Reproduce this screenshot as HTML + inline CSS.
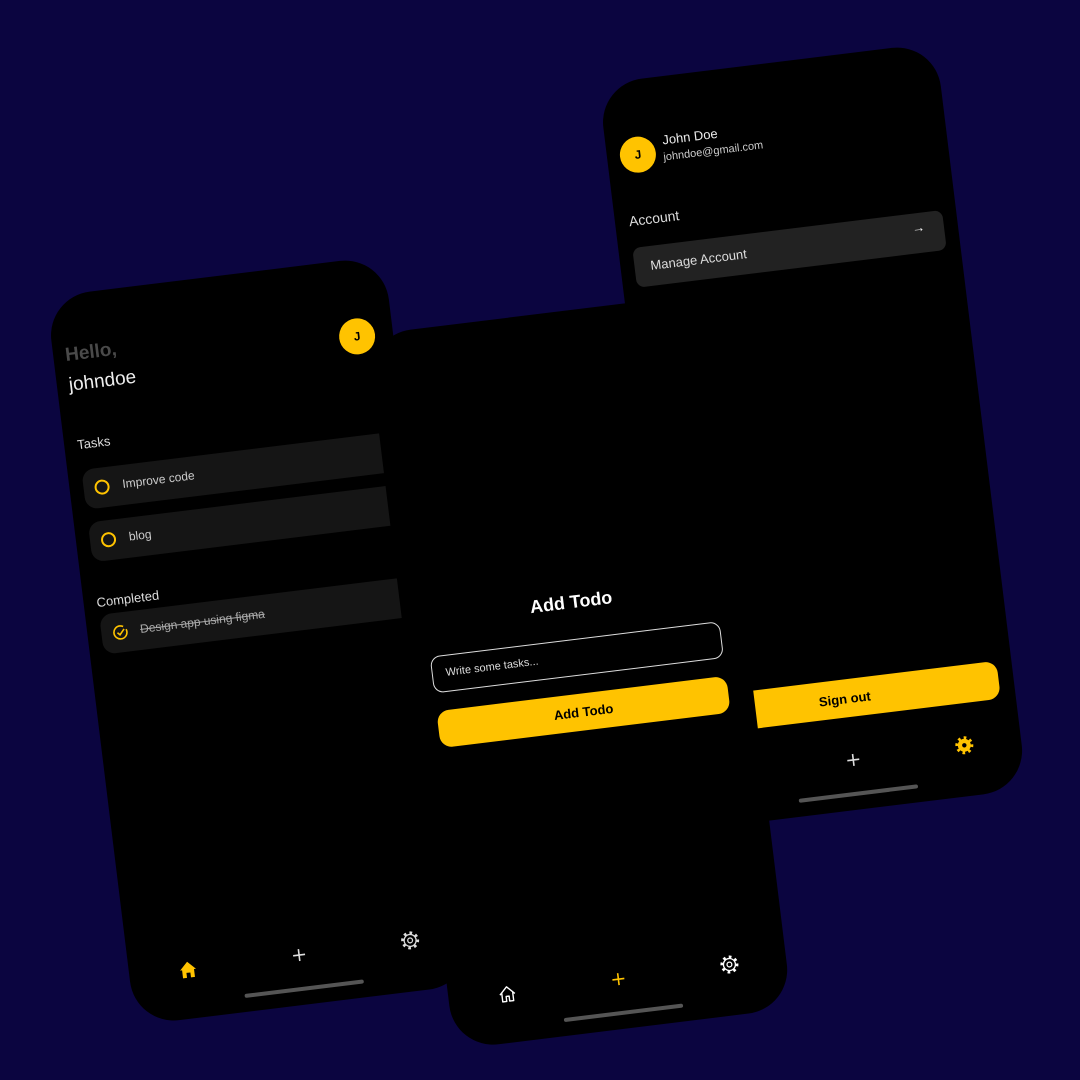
<!DOCTYPE html>
<html><head><meta charset="utf-8"><style>
*{margin:0;padding:0;box-sizing:border-box}
body{width:1080px;height:1080px;background:#0b0540;overflow:hidden;position:relative;font-family:"Liberation Sans",sans-serif}
.ph{position:absolute;width:340px;height:720px;background:#000;border-radius:44px;transform-origin:0 0;transform:rotate(-7deg);overflow:hidden}
.in{position:absolute;left:0;width:340px;height:720px}
.a{position:absolute;white-space:nowrap}
.av{position:absolute;width:36px;height:36px;border-radius:50%;background:#ffc300;color:#000;font-weight:bold;font-size:12px;display:flex;align-items:center;justify-content:center}
.card{position:absolute;left:14px;width:312px;height:40px;background:#151515;border-radius:12px}
.ind{position:absolute;left:112px;top:702px;width:120px;height:4px;border-radius:2px;background:#555}
.ic{position:absolute;width:22px;height:22px}
.btn{position:absolute;background:#ffc300;border-radius:12px;color:#000;font-weight:bold;font-size:13px;display:flex;align-items:center;justify-content:center}
</style></head><body>

<!-- left phone -->
<div class="ph" style="left:46px;top:297px;height:734px">
 <div class="in" style="top:14px">
  <div class="av" style="left:286px;top:45px">J</div>
  <div class="a" style="left:12px;top:36px;font-size:19px;font-weight:bold;color:#4a4a4a">Hello,</div>
  <div class="a" style="left:12px;top:66px;font-size:19px;color:#eee">johndoe</div>
  <div class="a" style="left:13px;top:129px;font-size:13px;color:#ddd">Tasks</div>
  <div class="card" style="top:162px"></div>
  <div class="a" style="left:25px;top:174px;width:15px;height:15px;border:2px solid #ffc300;border-radius:50%"></div>
  <div class="a" style="left:53px;top:174px;font-size:12px;color:#ccc">Improve code</div>
  <div class="card" style="top:215px"></div>
  <div class="a" style="left:25px;top:227px;width:15px;height:15px;border:2px solid #ffc300;border-radius:50%"></div>
  <div class="a" style="left:53px;top:227px;font-size:12px;color:#ccc">blog</div>
  <div class="a" style="left:13px;top:288px;font-size:13px;color:#ddd">Completed</div>
  <div class="card" style="top:308px"></div>
  <svg class="a" style="left:25px;top:320px" width="16" height="16" viewBox="0 0 16 16"><circle cx="8" cy="8" r="6.5" fill="none" stroke="#ffc300" stroke-width="1.6" stroke-dasharray="34 4"/><path d="M5 8l2.3 2.3L12 5" fill="none" stroke="#ffc300" stroke-width="1.6"/></svg>
  <div class="a" style="left:53px;top:320px;font-size:12px;color:#aaa;text-decoration:line-through">Design app using figma</div>
  <svg class="ic" style="left:48px;top:660px" viewBox="0 0 22 22"><path d="M3 11L11 3l8 8h-2v8h-4v-5H9v5H5v-8z" fill="#ffc300"/></svg>
  <svg class="ic" style="left:160px;top:659px" viewBox="0 0 22 22"><path d="M11 5v12M5 11h12" stroke="#ddd" stroke-width="1.6"/></svg>
  <svg class="ic" style="left:272px;top:658px" viewBox="0 0 22 22"><circle cx="11" cy="11" r="7.5" fill="none" stroke="#ddd" stroke-width="3" stroke-dasharray="2.6 3.3"/><circle cx="11" cy="11" r="6" fill="#000" stroke="#ddd" stroke-width="1.3"/><circle cx="11" cy="11" r="2.4" fill="none" stroke="#ddd" stroke-width="1.3"/></svg>
  <div class="ind"></div>
 </div>
</div>

<!-- right phone -->
<div class="ph" style="left:597.6px;top:83.6px;height:752px">
 <div class="in" style="top:32px">
  <div class="av" style="left:13px;top:25px">J</div>
  <div class="a" style="left:57px;top:24px;font-size:13px;color:#eee">John Doe</div>
  <div class="a" style="left:56px;top:43px;font-size:11px;color:#ccc">johndoe@gmail.com</div>
  <div class="a" style="left:14px;top:100px;font-size:14px;color:#ddd">Account</div>
  <div class="a" style="left:14px;top:135px;width:312px;height:40px;background:#222;border-radius:8px"></div>
  <div class="a" style="left:30px;top:147px;font-size:13px;color:#ddd">Manage Account</div>
  <div class="a" style="left:294px;top:142px;font-size:13px;color:#eee">→</div>
  <div class="btn" style="left:15px;top:589px;width:310px;height:38px">Sign out</div>
  <svg class="ic" style="left:160px;top:659px" viewBox="0 0 22 22"><path d="M11 5v12M5 11h12" stroke="#ddd" stroke-width="1.6"/></svg>
  <svg class="ic" style="left:272px;top:658px" viewBox="0 0 22 22"><circle cx="11" cy="11" r="7.5" fill="none" stroke="#ffc300" stroke-width="3" stroke-dasharray="2.6 3.3"/><circle cx="11" cy="11" r="6.5" fill="#ffc300"/><circle cx="11" cy="11" r="2.2" fill="#000"/></svg>
  <div class="ind"></div>
 </div>
</div>

<!-- middle phone -->
<div class="ph" style="left:367px;top:335px">
  <div class="a" style="left:0;width:340px;text-align:center;top:280px;font-size:18px;font-weight:bold;color:#fff">Add Todo</div>
  <div class="a" style="left:23px;top:327px;width:292px;height:37px;border:1px solid #ddd;border-radius:10px"></div>
  <div class="a" style="left:37px;top:339px;font-size:11px;color:#ddd">Write some tasks...</div>
  <div class="btn" style="left:23px;top:382px;width:292px;height:37px">Add Todo</div>
  <svg class="ic" style="left:48px;top:660px" viewBox="0 0 22 22"><path d="M3.5 11.5L11 4l7.5 7.5M5.5 10v8.5h4v-5h3v5h4V10" fill="none" stroke="#fff" stroke-width="1.4" stroke-linejoin="round"/></svg>
  <svg class="ic" style="left:160px;top:659px" viewBox="0 0 22 22"><path d="M11 5v12M5 11h12" stroke="#ffc300" stroke-width="1.6"/></svg>
  <svg class="ic" style="left:272px;top:658px" viewBox="0 0 22 22"><circle cx="11" cy="11" r="7.5" fill="none" stroke="#fff" stroke-width="3" stroke-dasharray="2.6 3.3"/><circle cx="11" cy="11" r="6" fill="#000" stroke="#fff" stroke-width="1.3"/><circle cx="11" cy="11" r="2.4" fill="none" stroke="#fff" stroke-width="1.3"/></svg>
  <div class="ind"></div>
</div>

</body></html>
